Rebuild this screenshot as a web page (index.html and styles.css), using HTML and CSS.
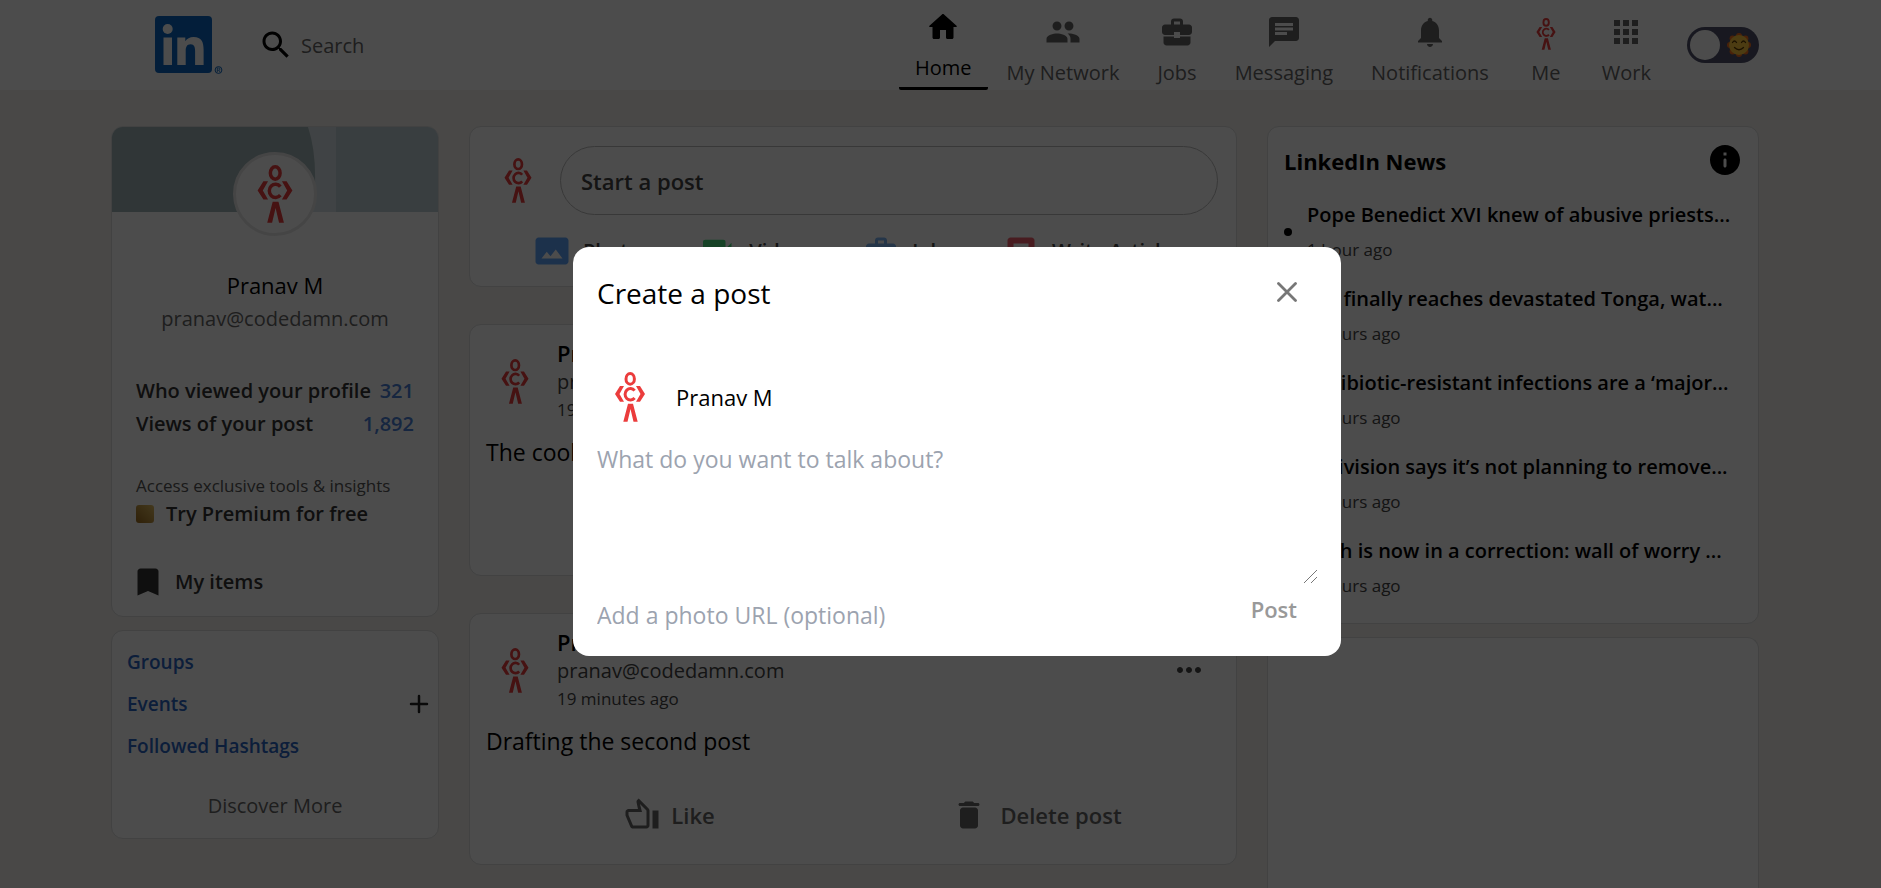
FILE: index.html
```html
<!DOCTYPE html>
<html lang="en">
<head>
<meta charset="utf-8">
<title>LinkedIn</title>
<link rel="stylesheet" href="styles.css">
</head>
<body>
<svg class="defs" aria-hidden="true">
  <symbol id="figure" viewBox="0 0 30 50">
    <ellipse cx="15.2" cy="6.9" rx="4.2" ry="5.3" fill="none" stroke="#eb3c3c" stroke-width="3"/>
    <path d="M19.6 18.6a5.4 5.7 0 1 0 0 7.4" fill="none" stroke="#eb3c3c" stroke-width="3"/>
    <path d="M0 22l5-8h4l-4.500 8L9 29.700H5zM30 22l-5-8h-4l4.500 8-4.500 7.700h4zM8.300 49.700L13 31.700h5l4.700 18h-4.200L15.500 37l-3 12.700z" fill="#eb3c3c"/>
  </symbol>
  <symbol id="work-case" viewBox="0 0 24 24"><path d="M10 16v-1H3v4c0 1.100.9 2 2 2h14c1.100 0 2-.9 2-2v-4h-7v1h-4zm10-9h-4V5c0-1.200-.8-2-2-2h-4c-1.200 0-2 .8-2 2v2H4c-1.100 0-2 .9-2 2v3c0 1.100.9 2 2 2h6v-2h4v2h6c1.100 0 2-.9 2-2V9c0-1.100-.9-2-2-2zm-6 0h-4V5h4v2z"/></symbol>
  <symbol id="thumb" viewBox="0 0 24 24"><g transform="matrix(-1 0 0 1 24 0)"><path d="M21 8h-6.310l.950-4.570.030-.320c0-.410-.170-.790-.440-1.060L14.170 1 7.590 7.590C7.220 7.950 7 8.450 7 9v10c0 1.100.9 2 2 2h9c.830 0 1.540-.5 1.840-1.220l3.020-7.050c.090-.230.140-.470.140-.730v-2c0-1.100-.9-2-2-2zm0 4l-3 7H9V9l4.340-4.340L12 10h9v2zM1 9h4v12H1z"/></g></symbol>
  <symbol id="bin" viewBox="0 0 24 24"><path d="M6 19c0 1.100.9 2 2 2h8c1.100 0 2-.9 2-2V9c0-1.100-.9-2-2-2H8c-1.100 0-2 .9-2 2v10zM18 4h-2.500l-.710-.710c-.180-.180-.440-.290-.7-.290H9.910c-.260 0-.520.110-.7.290L8.500 4H6c-.550 0-1 .450-1 1s.450 1 1 1h12c.550 0 1-.450 1-1s-.450-1-1-1z"/></symbol>
  <symbol id="more" viewBox="0 0 24 24"><path d="M6 10c-1.100 0-2 .9-2 2s.9 2 2 2 2-.9 2-2-.9-2-2-2zm12 0c-1.100 0-2 .9-2 2s.9 2 2 2 2-.9 2-2-.9-2-2-2zm-6 0c-1.100 0-2 .9-2 2s.9 2 2 2 2-.9 2-2-.9-2-2-2z"/></symbol>
</svg>

<header class="header">
  <div class="brand">
    <svg class="logo" viewBox="0 0 68 58" role="img" aria-label="LinkedIn">
      <rect width="57" height="57" rx="4" fill="#0a66c2"/>
      <circle cx="12.700" cy="13" r="5" fill="#fff"/>
      <path d="M8.500 21.500h8.500v27.500h-8.500zM22.300 21.500h8v3.800c1.500-2.700 4.500-4.400 8.300-4.400 8 0 10 5 10 12.600V49h-8.500V35c0-3.700-.8-6.800-4.500-6.800-3.800 0-4.900 2.900-4.900 6.700V49h-8.400z" fill="#fff"/>
      <circle cx="63.500" cy="54" r="3.400" fill="none" stroke="#0a66c2" stroke-width="1"/>
      <path d="M62.300 56v-4h1.500a1 1 0 0 1 0 2.200h-1.500m1.500 0l1.200 1.800" fill="none" stroke="#0a66c2" stroke-width=".8"/>
    </svg>
    <label class="search">
      <svg class="icon" viewBox="0 0 24 24"><path d="M15.500 14h-.790l-.280-.270C15.410 12.590 16 11.110 16 9.500 16 5.910 13.090 3 9.500 3S3 5.910 3 9.500 5.910 16 9.500 16c1.610 0 3.090-.590 4.230-1.570l.270.280v.790l5 4.990L20.490 19l-4.990-5zm-6 0C7.010 14 5 11.990 5 9.500S7.010 5 9.500 5 14 7.010 14 9.500 11.990 14 9.500 14z"/></svg>
      <input type="text" placeholder="Search" aria-label="Search">
    </label>
  </div>
  <nav class="nav">
    <a class="nav-item active" href="#"><svg class="icon" viewBox="0 0 24 24"><path d="M10 19v-5h4v5c0 .550.450 1 1 1h3c.550 0 1-.450 1-1v-7h1.700c.460 0 .680-.570.330-.870L12.670 3.600c-.380-.340-.960-.340-1.340 0l-8.360 7.530c-.340.3-.130.870.330.870H5v7c0 .550.450 1 1 1h3c.550 0 1-.450 1-1z"/></svg><span>Home</span></a>
    <a class="nav-item" href="#"><svg class="icon" viewBox="0 0 24 24"><path d="M16 11c1.660 0 2.990-1.340 2.990-3S17.660 5 16 5s-3 1.340-3 3 1.340 3 3 3zm-8 0c1.660 0 2.990-1.340 2.990-3S9.660 5 8 5 5 6.340 5 8s1.340 3 3 3zm0 2c-2.330 0-7 1.170-7 3.500V19h14v-2.500c0-2.330-4.670-3.500-7-3.500zm8 0c-.290 0-.620.020-.970.050C16.190 13.890 17 15.020 17 16.500V19h6v-2.500c0-2.330-4.670-3.500-7-3.500z"/></svg><span>My Network</span></a>
    <a class="nav-item" href="#"><svg class="icon"><use href="#work-case"/></svg><span>Jobs</span></a>
    <a class="nav-item" href="#"><svg class="icon" viewBox="0 0 24 24"><path d="M20 2H4c-1.100 0-2 .9-2 2v18l4-4h14c1.100 0 2-.9 2-2V4c0-1.100-.9-2-2-2zM6 9h12v2H6V9zm8 5H6v-2h8v2zm4-6H6V6h12v2z"/></svg><span>Messaging</span></a>
    <a class="nav-item" href="#"><svg class="icon" viewBox="0 0 24 24"><path d="M12 22c1.100 0 2-.9 2-2h-4c0 1.100.9 2 2 2zm6-6v-5c0-3.070-1.640-5.640-4.500-6.320V4c0-.830-.670-1.500-1.500-1.500s-1.500.670-1.500 1.500v.680C7.630 5.360 6 7.920 6 11v5l-2 2v1h16v-1l-2-2z"/></svg><span>Notifications</span></a>
    <a class="nav-item narrow" href="#"><svg class="icon figure-nav"><use href="#figure"/></svg><span>Me</span></a>
    <a class="nav-item narrow" href="#"><svg class="icon" viewBox="0 0 24 24"><path d="M4 8h4V4H4v4zm6 12h4v-4h-4v4zm-6 0h4v-4H4v4zm0-6h4v-4H4v4zm6 0h4v-4h-4v4zm6-10v4h4V4h-4zm-6 4h4V4h-4v4zm6 6h4v-4h-4v4zm0 6h4v-4h-4v4z"/></svg><span>Work</span></a>
    <button class="theme" type="button" aria-label="Toggle theme">
      <span class="knob"></span>
      <svg class="sun" viewBox="0 0 24 24">
        <g fill="#f4711f"><circle cx="12" cy="3" r="3"/><circle cx="12" cy="21" r="3"/><circle cx="3" cy="12" r="3"/><circle cx="21" cy="12" r="3"/><circle cx="5.600" cy="5.600" r="3"/><circle cx="18.400" cy="5.600" r="3"/><circle cx="5.600" cy="18.400" r="3"/><circle cx="18.400" cy="18.400" r="3"/></g>
        <circle cx="12" cy="12" r="10" fill="#ffc83d"/>
        <path d="M5.500 9.500q2-3 4 0M14.500 9.500q2-3 4 0M7.500 14.500q4.500 4.500 9 0" fill="none" stroke="#5a3a00" stroke-width="1.300" stroke-linecap="round"/>
      </svg>
    </button>
  </nav>
</header>

<main class="columns">
  <aside class="column side">
    <section class="card profile">
      <svg class="banner" viewBox="0 0 326 84" preserveAspectRatio="none"><rect width="326" height="84" fill="#d8e2e6"/><path d="M0 0h196q8 24 7 56l-6 28H0z" fill="#a0b4b7"/><path d="M224 0h102v84H224z" fill="#bfcfd6"/></svg>
      <div class="avatar"><svg><use href="#figure"/></svg></div>
      <h2 class="name">Pranav M</h2>
      <p class="email">pranav@codedamn.com</p>
      <div class="stats">
        <p><span>Who viewed your profile</span><b>321</b></p>
        <p><span>Views of your post</span><b>1,892</b></p>
      </div>
      <div class="premium">
        <p class="hint">Access exclusive tools &amp; insights</p>
        <a href="#"><i class="gold"></i>Try Premium for free</a>
      </div>
      <a class="items" href="#"><svg class="icon" viewBox="0 0 24 24"><path d="M17 3H7c-1.100 0-2 .9-2 2v16l7-3 7 3V5c0-1.100-.9-2-2-2z"/></svg>My items</a>
    </section>
    <section class="card links">
      <a href="#">Groups</a>
      <div class="row"><a href="#">Events</a><button type="button" aria-label="Add event"><svg viewBox="0 0 20 20"><path d="M10 2v16M2 10h16" stroke="#222" stroke-width="2.500" stroke-linecap="round"/></svg></button></div>
      <a href="#">Followed Hashtags</a>
      <a class="discover" href="#">Discover More</a>
    </section>
  </aside>

  <section class="column feed">
    <div class="card starter">
      <div class="start-row">
        <svg class="figure"><use href="#figure"/></svg>
        <button class="start" type="button">Start a post</button>
      </div>
      <div class="kinds">
        <button type="button"><svg class="icon photo" viewBox="0 0 24 24"><path d="M21 3H3C2 3 1 4 1 5v14c0 1.100.9 2 2 2h18c1 0 2-1 2-2V5c0-1-1-2-2-2zM5 17l3.500-4.500 2.500 3L14.500 11l4.500 6H5z"/></svg>Photo</button>
        <button type="button"><svg class="icon video" viewBox="0 0 24 24"><path d="M17 10.500V6c0-1-.5-1.500-1.500-1.500h-12C2.500 4.500 2 5 2 6v12c0 .6.400 1 1 1h13c.6 0 1-.4 1-1v-4.500l4 4v-11z"/></svg>Video</button>
        <button type="button"><svg class="icon job"><use href="#work-case"/></svg>Job</button>
        <button type="button"><svg class="icon article" viewBox="0 0 24 24"><path d="M19 3H5c-1.100 0-2 .9-2 2v14c0 1.100.9 2 2 2h14c1.100 0 2-.9 2-2V5c0-1.100-.9-2-2-2zm-2 10H7V7h10z"/></svg>Write Article</button>
      </div>
    </div>
    <article class="card post">
      <div class="author">
        <svg class="figure"><use href="#figure"/></svg>
        <div><h3>Pranav M</h3><p class="mail">pranav@codedamn.com</p><p class="when">19 minutes ago</p></div>
        <button type="button" aria-label="More"><svg class="icon"><use href="#more"/></svg></button>
      </div>
      <p class="body">The coolest post</p>
      <div class="actions"><button type="button"><svg class="icon"><use href="#thumb"/></svg>Like</button><button class="delete" type="button"><svg class="icon"><use href="#bin"/></svg>Delete post</button></div>
    </article>
    <article class="card post">
      <div class="author">
        <svg class="figure"><use href="#figure"/></svg>
        <div><h3>Pranav M</h3><p class="mail">pranav@codedamn.com</p><p class="when">19 minutes ago</p></div>
        <button type="button" aria-label="More"><svg class="icon"><use href="#more"/></svg></button>
      </div>
      <p class="body">Drafting the second post</p>
      <div class="actions"><button type="button"><svg class="icon"><use href="#thumb"/></svg>Like</button><button class="delete" type="button"><svg class="icon"><use href="#bin"/></svg>Delete post</button></div>
    </article>
  </section>

  <aside class="column side">
    <section class="card news">
      <div class="news-head"><h2>LinkedIn News</h2><svg class="icon" viewBox="0 0 24 24"><path d="M12 2C6.480 2 2 6.480 2 12s4.480 10 10 10 10-4.480 10-10S17.520 2 12 2zm0 15c-.550 0-1-.450-1-1v-4c0-.550.450-1 1-1s1 .450 1 1v4c0 .550-.450 1-1 1zm1-8h-2V7h2v2z"/></svg></div>
      <ul>
        <li><div><a href="#">Pope Benedict XVI knew of abusive priests...</a><p>1 hour ago</p></div></li>
        <li><div><a href="#">Aid finally reaches devastated Tonga, wat...</a><p>2 hours ago</p></div></li>
        <li><div><a href="#">Antibiotic-resistant infections are a ‘major...</a><p>3 hours ago</p></div></li>
        <li><div><a href="#">Activision says it’s not planning to remove...</a><p>4 hours ago</p></div></li>
        <li><div><a href="#">Tech is now in a correction: wall of worry ...</a><p>5 hours ago</p></div></li>
      </ul>
    </section>
    <section class="card ad"></section>
  </aside>
</main>

<div class="overlay">
  <form class="modal" role="dialog" aria-label="Create a post">
    <div class="modal-head"><h1>Create a post</h1><button type="button" aria-label="Close"><svg viewBox="0 0 20 20"><path d="M1.500 1.500l17 17M18.500 1.500l-17 17" stroke="#777" stroke-width="2.800" stroke-linecap="round"/></svg></button></div>
    <div class="who"><svg><use href="#figure"/></svg><span>Pranav M</span></div>
    <textarea placeholder="What do you want to talk about?" aria-label="Post text"></textarea>
    <div class="modal-foot"><input type="text" placeholder="Add a photo URL (optional)" aria-label="Photo URL"><button type="submit">Post</button></div>
  </form>
</div>
</body>
</html>
```

FILE: styles.css
```css
* { box-sizing: border-box; margin: 0; padding: 0; }
html { height: 100%; }
body {
  height: 100%;
  overflow: hidden;
  background: #f3f2ef;
  color: #000;
  font-family: "Open Sans", "Noto Sans", sans-serif;
  font-size: 20px;
  line-height: 28px;
}
a { color: inherit; text-decoration: none; }
button, input, textarea { font: inherit; color: inherit; background: none; border: 0; outline: 0; }
ul { list-style: none; }
svg { display: block; flex: none; }
.defs { position: absolute; width: 0; height: 0; }
.icon { width: 36px; height: 36px; fill: currentColor; }

.header {
  display: flex;
  justify-content: space-between;
  height: 90px;
  padding: 0 122px 0 155px;
  background: #fff;
}
.brand { display: flex; align-items: center; gap: 35px; }
.logo { width: 68px; height: 58px; }
.search { display: flex; align-items: center; gap: 7px; }
.search input { width: 200px; height: 30px; }
.search input::placeholder { color: #666; opacity: 1; }
.nav { display: flex; align-items: stretch; color: #666; }
.nav-item {
  display: flex;
  flex-direction: column;
  align-items: center;
  gap: 9px;
  padding: 14px 19px 0;
}
.nav-item.narrow { padding: 14px 18px 0; }
.nav-item.active {
  padding: 9px 16px 0;
  border-bottom: 3px solid #000;
  border-radius: 2px;
  color: #000;
}
.figure-nav { width: 40px; height: 32px; margin: 4px 0 0; }
.theme {
  display: flex;
  align-items: center;
  align-self: center;
  justify-content: space-between;
  width: 72px;
  height: 36px;
  margin: 0 0 0 18px;
  padding: 0 8px 0 3px;
  border-radius: 18px;
  background: #50536b;
}
.knob { width: 30px; height: 30px; border-radius: 50%; background: #fff; }
.sun { width: 24px; height: 24px; }

.columns {
  display: grid;
  grid-template-columns: 328fr 768fr 492fr;
  gap: 30px;
  height: calc(100% - 90px);
  padding: 36px 122px 0 111px;
}
.column { display: flex; flex-direction: column; min-width: 0; }
.side { gap: 13px; }
.feed { gap: 37px; }
.card { flex: none; background: #fff; border: 1px solid #dcdcdc; border-radius: 12px; overflow: hidden; }

.profile { display: flex; flex-direction: column; padding-bottom: 16px; }
.banner { width: 100%; height: 85px; }
.avatar {
  display: grid;
  place-items: center;
  align-self: center;
  width: 84px;
  height: 84px;
  margin-top: -60px;
  border: 3px solid #e8e8e8;
  border-radius: 50%;
  background: #fff;
  z-index: 1;
}
.avatar svg { width: 36px; height: 58px; }
.name { margin-top: 33px; font-size: 22px; line-height: 32px; font-weight: 400; text-align: center; }
.email { margin-top: 2px; line-height: 32px; color: #666; text-align: center; }
.stats { margin: 39px 24px 0; font-weight: 600; color: #333; line-height: 33px; }
.stats p { display: flex; justify-content: space-between; white-space: nowrap; }
.stats b { font-weight: 600; color: #4a80d8; }
.premium { margin: 32px 24px 0; color: #333; font-weight: 600; }
.premium a { display: flex; align-items: center; gap: 12px; }
.hint { font-size: 17px; font-weight: 400; color: #555; white-space: nowrap; }
.gold { width: 18px; height: 18px; border-radius: 3px; background: linear-gradient(45deg, #9b6a1e, #e0bd62); }
.items { display: flex; align-items: center; gap: 9px; margin: 36px 18px 0; font-weight: 600; color: #333; }

.links { display: flex; flex-direction: column; gap: 14px; padding: 17px 6px 18px 15px; font-weight: 600; font-size: 19px; color: #2b64c4; }
.row { display: flex; justify-content: space-between; align-items: center; }
.row button { width: 26px; height: 26px; padding: 3px; }
.links .discover { margin: 18px 9px 0 0; text-align: center; font-size: 20px; font-weight: 500; color: #666; }

.figure { width: 28px; height: 45px; }
.starter { height: 161px; padding: 19px 18px 0 34px; }
.start-row { display: flex; align-items: center; gap: 28px; }
.start {
  flex: 1;
  height: 69px;
  padding: 0 20px;
  border: 1px solid #bbb;
  border-radius: 35px;
  text-align: left;
  font-size: 22px;
  font-weight: 600;
  color: #444;
}
.kinds { display: flex; justify-content: space-between; margin-top: 18px; padding: 0 46px 0 30px; }
.kinds button { display: flex; align-items: center; gap: 13px; font-weight: 600; color: #444; }
.photo { color: #60a5fa; }
.video { color: #4ade80; }
.job { color: #7eb6f5; }
.article { color: #f2606c; }

.post { height: 252px; padding: 12px 16px 0; }
.author { display: flex; align-items: center; }
.author .figure { margin: 0 28px 0 15px; }
.author > div { flex: 1; }
.author h3 { font-size: 22px; line-height: 32px; font-weight: 600; }
.author button { width: 36px; height: 36px; margin: 0 13px 0 0; color: #444; }
.mail { line-height: 26px; color: #444; }
.when { font-size: 17px; line-height: 30px; color: #444; }
.body { margin-top: 11px; font-size: 23px; line-height: 32px; }
.actions { display: grid; grid-template-columns: 1fr 1fr; margin-top: 40px; }
.actions button { display: flex; align-items: center; justify-content: center; gap: 11px; font-size: 22px; font-weight: 600; color: #666; }
.actions .delete { gap: 13px; }

.news { padding: 15px 15px 13px 16px; }
.news-head { display: flex; justify-content: space-between; margin-bottom: 10px; }
.news-head h2 { font-size: 22px; line-height: 38px; font-weight: 700; }
.news li { display: flex; align-items: center; gap: 15px; height: 84px; }
.news li::before { content: ""; flex: none; width: 8px; height: 8px; border-radius: 50%; background: #000; }
.news li div { min-width: 0; white-space: nowrap; }
.news li a { display: block; font-weight: 600; line-height: 35px; }
.news li p { font-size: 17px; line-height: 35px; color: #444; }
.ad { flex: 1 0 auto; border-bottom: 0; border-radius: 12px 12px 0 0; }

.overlay {
  position: fixed;
  inset: 0;
  display: flex;
  align-items: center;
  justify-content: center;
  padding: 14px 0 0 33px;
  background: rgba(0, 0, 0, .7);
  z-index: 10;
}
.modal { width: 768px; max-width: 100%; padding: 22px 24px 18px; border-radius: 16px; background: #fff; }
.modal-head { display: flex; justify-content: space-between; align-items: flex-start; }
.modal-head h1 { font-size: 28px; line-height: 48px; font-weight: 400; }
.modal-head button { width: 20px; height: 20px; margin: 13px 20px 0 0; }
.who { display: flex; align-items: center; gap: 31px; margin: 55px 0 0 18px; font-size: 22px; }
.who svg { width: 30px; height: 50px; }
.modal textarea { display: block; width: 100%; height: 140px; margin-top: 21px; font-size: 23px; line-height: 32px; resize: both; }
.modal textarea::-webkit-resizer {
  background: linear-gradient(135deg, transparent 54%, #777 54%, #777 59%, transparent 59%, transparent 77%, #777 77%, #777 82%, transparent 82%);
}
.modal ::placeholder { color: #9ca3af; opacity: 1; }
.modal-foot { display: flex; justify-content: space-between; align-items: flex-start; padding: 10px 20px 0 0; font-size: 22px; line-height: 32px; }
.modal-foot input { width: 400px; height: 45px; font-size: 23px; }
.modal-foot button { font-weight: 600; color: #999; }
```
